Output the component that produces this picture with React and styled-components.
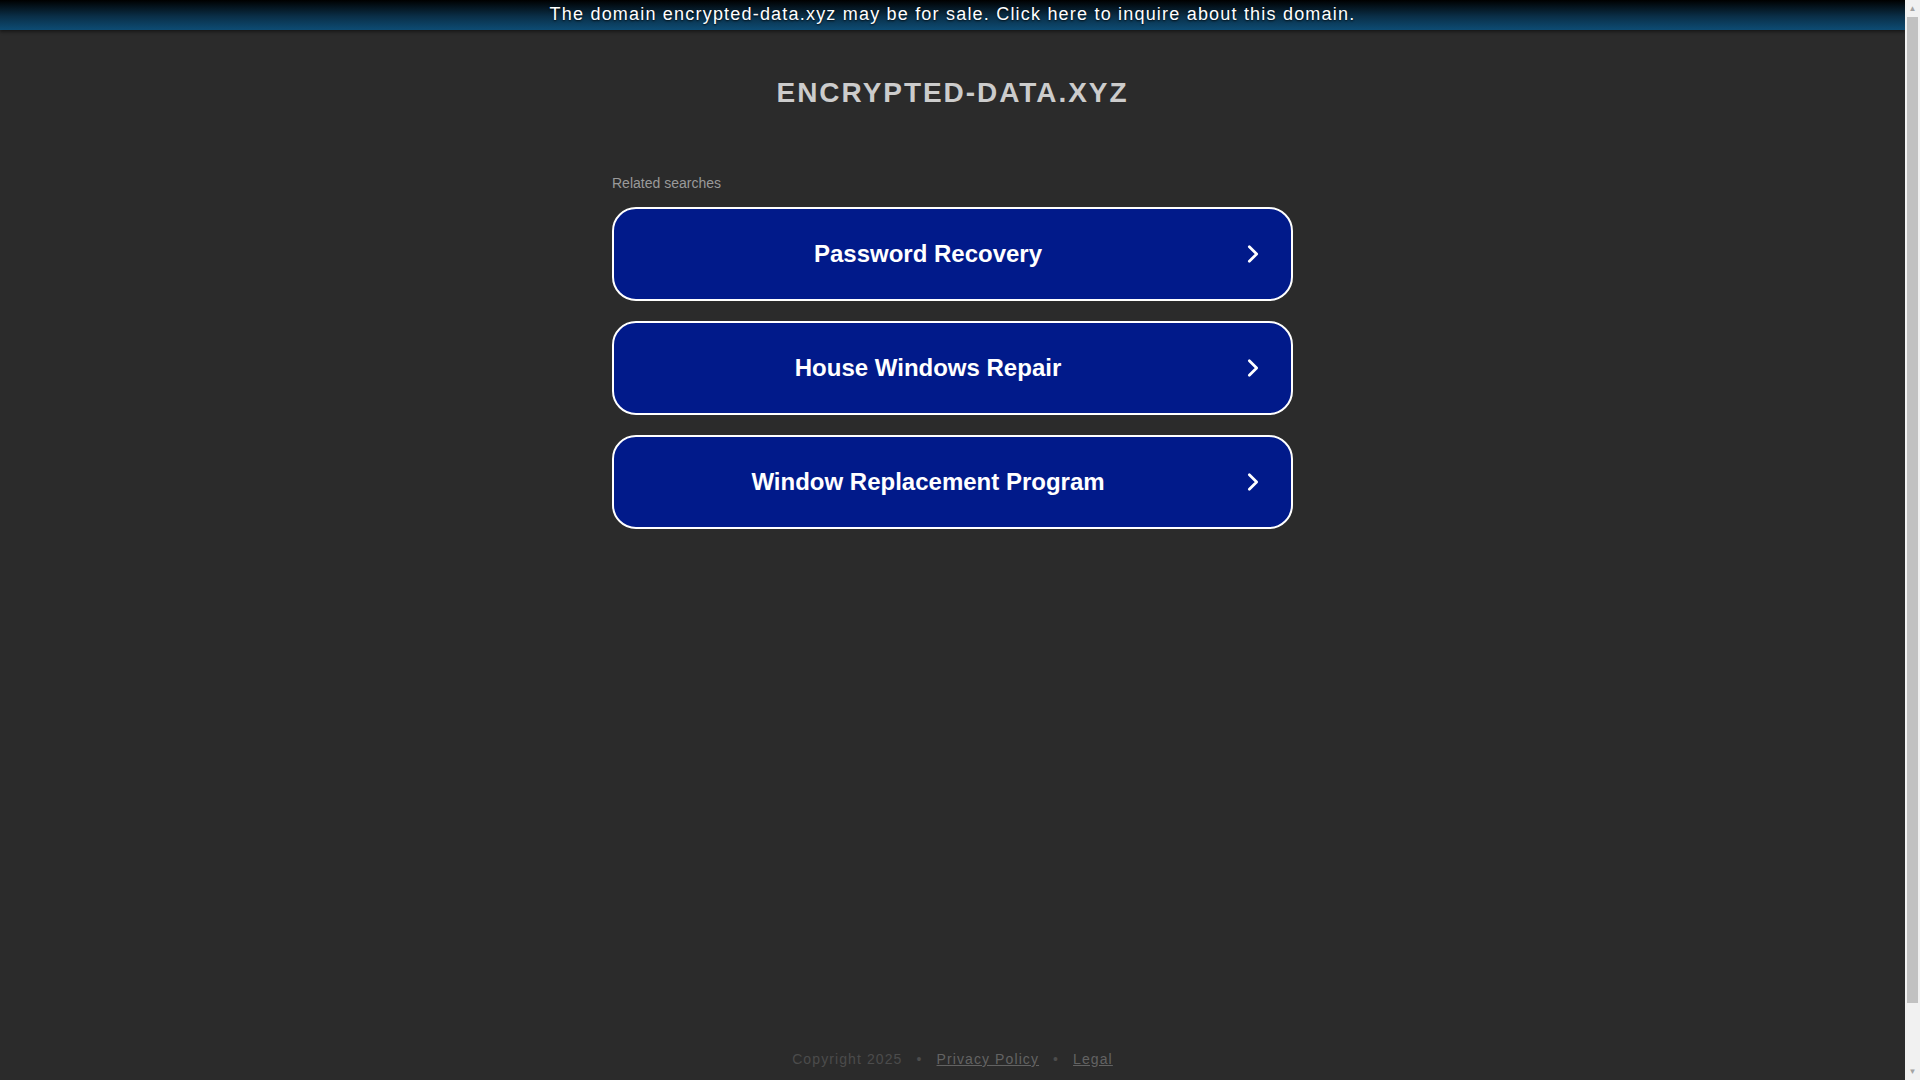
import React from 'react';
import styled, { createGlobalStyle } from 'styled-components';

const GlobalStyle = createGlobalStyle`
  html, body {
    margin: 0;
    padding: 0;
    background: #2b2b2b;
    font-family: "Liberation Sans", Arial, sans-serif;
    overflow: hidden;
  }
`;

const Layout = styled.div`
  display: flex;
  height: 100vh;
`;

const Page = styled.div`
  flex: 1;
  display: flex;
  flex-direction: column;
  align-items: center;
`;

const Banner = styled.a`
  display: block;
  width: 100%;
  height: 30px;
  line-height: 28px;
  text-align: center;
  font-size: 18px;
  letter-spacing: 1.2px;
  color: #ffffff;
  text-decoration: none;
  text-shadow: 0 1px 2px rgba(0, 0, 0, 0.8);
  background: linear-gradient(to bottom, #000000 0%, #0a2f48 55%, #0d4c74 100%);
  box-shadow: 0 2px 3px rgba(0, 0, 0, 0.45);
`;

const Title = styled.h1`
  margin: 47px 0 0;
  font-size: 28px;
  font-weight: bold;
  letter-spacing: 1.95px;
  line-height: 32px;
  color: #cccccc;
`;

const Searches = styled.div`
  width: 681px;
  margin-top: 66px;
  display: flex;
  flex-direction: column;
`;

const Label = styled.div`
  font-size: 14px;
  color: #9a9a9a;
  line-height: 16px;
  margin-bottom: 16px;
`;

const SearchButton = styled.a`
  display: flex;
  align-items: center;
  box-sizing: border-box;
  height: 94px;
  margin-bottom: 20px;
  border: 2px solid #ffffff;
  border-radius: 24px;
  background: #011a8a;
  color: #ffffff;
  text-decoration: none;
  cursor: pointer;
`;

const ButtonText = styled.span`
  flex: 1;
  text-align: center;
  font-size: 24px;
  font-weight: bold;
`;

const Chevron = styled.svg`
  width: 22px;
  height: 22px;
  margin-right: 27px;
`;

const Footer = styled.footer`
  margin-top: auto;
  padding: 0 0 11px;
  font-size: 14px;
  letter-spacing: 1.1px;
  line-height: 20px;
  color: #4c4c4c;
  display: flex;
  gap: 14px;
`;

const FooterLink = styled.a`
  color: #636363;
  text-decoration: underline;
`;

const ScrollTrack = styled.div`
  width: 15px;
  background: #f1f1f1;
  display: flex;
  flex-direction: column;
  align-items: center;
`;

const ScrollArrow = styled.div`
  height: 17px;
  display: flex;
  align-items: center;
  justify-content: center;
  color: #a3a3a3;
  font-size: 8px;
  line-height: 1;
`;

const ScrollThumb = styled.div`
  width: 11px;
  height: 986px;
  background: #c1c1c1;
`;

const Filler = styled.div`
  flex: 1;
`;

const searches = ['Password Recovery', 'House Windows Repair', 'Window Replacement Program'];

export default function App() {
  return (
    <>
      <GlobalStyle />
      <Layout>
        <Page>
          <Banner href="#">The domain encrypted-data.xyz may be for sale. Click here to inquire about this domain.</Banner>
          <Title>ENCRYPTED-DATA.XYZ</Title>
          <Searches>
            <Label>Related searches</Label>
            {searches.map((s) => (
              <SearchButton key={s} href="#">
                <ButtonText>{s}</ButtonText>
                <Chevron viewBox="0 0 24 24" fill="none" stroke="#ffffff" strokeWidth="3" strokeLinecap="round" strokeLinejoin="round">
                  <polyline points="8,4 16,12 8,20" />
                </Chevron>
              </SearchButton>
            ))}
          </Searches>
          <Footer>
            <span>Copyright 2025</span>
            <span>•</span>
            <FooterLink href="#">Privacy Policy</FooterLink>
            <span>•</span>
            <FooterLink href="#">Legal</FooterLink>
          </Footer>
        </Page>
        <ScrollTrack>
          <ScrollArrow>▲</ScrollArrow>
          <ScrollThumb />
          <Filler />
          <ScrollArrow>▼</ScrollArrow>
        </ScrollTrack>
      </Layout>
    </>
  );
}
